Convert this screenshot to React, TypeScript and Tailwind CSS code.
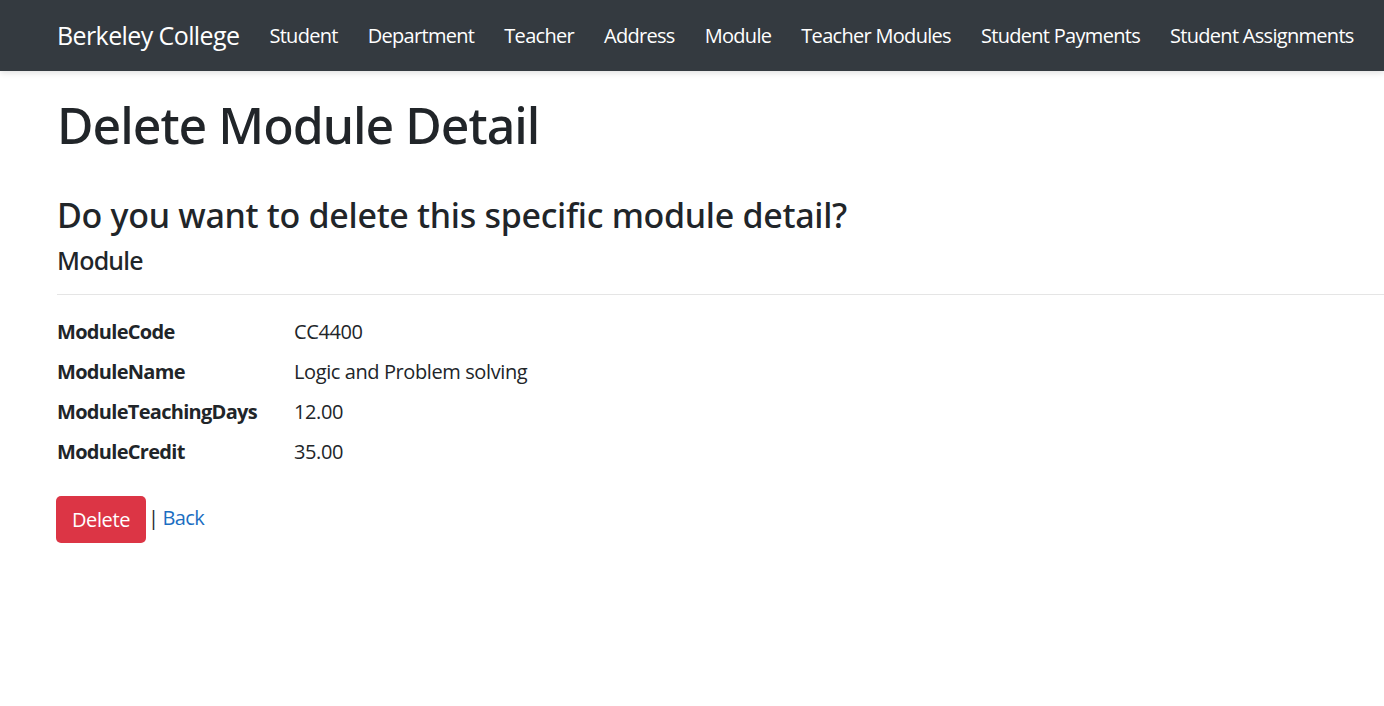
import React from 'react';

// 상단 메뉴 항목
const navItems = [
  'Student',
  'Department',
  'Teacher',
  'Address',
  'Module',
  'Teacher Modules',
  'Student Payments',
  'Student Assignments',
];

// 모듈 상세 정보
const details = [
  { label: 'ModuleCode', value: 'CC4400' },
  { label: 'ModuleName', value: 'Logic and Problem solving' },
  { label: 'ModuleTeachingDays', value: '12.00' },
  { label: 'ModuleCredit', value: '35.00' },
];

const App = () => {
  return (
    <div className="min-h-screen bg-white text-[#212529] font-['Open_Sans',sans-serif]">
      {/* 네비게이션 바 */}
      <nav className="h-[71px] bg-[#343a40] shadow-[0_2px_6px_rgba(0,0,0,0.12)] flex items-center pl-[57px]">
        <span className="text-[25px] tracking-[-0.6px] text-white mr-[30px] whitespace-nowrap">Berkeley College</span>
        <div className="flex items-center gap-[30px]">
          {navItems.map((item) => (
            <span key={item} className="text-[20px] tracking-[-0.7px] text-white whitespace-nowrap">
              {item}
            </span>
          ))}
        </div>
      </nav>

      <main className="pl-[57px]">
        <h1 className="mt-[24px] text-[50px] leading-[60px] font-medium tracking-[-1px] font-['Noto_Sans',sans-serif]">
          Delete Module Detail
        </h1>
        <h3 className="mt-[39px] text-[34px] leading-[42px] font-medium tracking-[-0.3px] font-['Noto_Sans',sans-serif]">
          Do you want to delete this specific module detail?
        </h3>
        <h4 className="mt-[9px] text-[25px] leading-[30px] font-medium tracking-[-0.8px] font-['Noto_Sans',sans-serif]">
          Module
        </h4>
        <hr className="mt-[19px] border-t border-[#e5e5e5]" />

        {/* 상세 목록 */}
        <dl className="mt-[22px] flex flex-col gap-[10px]">
          {details.map((d) => (
            <div key={d.label} className="flex text-[20px] leading-[30px]">
              <dt className="w-[237px] font-bold tracking-[-0.7px]">{d.label}</dt>
              <dd className="tracking-[-0.4px]">{d.value}</dd>
            </div>
          ))}
        </dl>

        <div className="mt-[29px] flex items-center">
          <button className="w-[90px] h-[47px] rounded-[5px] bg-[#dc3545] text-white text-[20px] tracking-[-0.4px] ml-[-1px]">
            Delete
          </button>
          <span className="ml-[2px] text-[20px] leading-[30px] -mt-[4px] tracking-[-0.6px]">
            |<span className="ml-[4px] text-[#1b6ec2]">Back</span>
          </span>
        </div>
      </main>
    </div>
  );
};

export default App;
